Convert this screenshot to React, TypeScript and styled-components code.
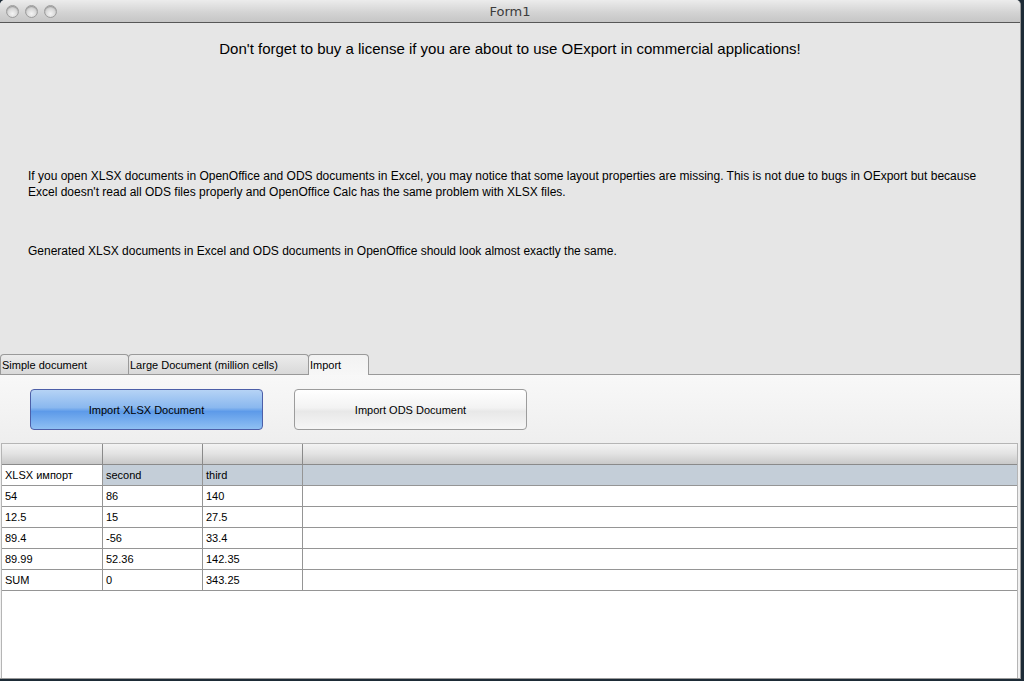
import styled, { createGlobalStyle } from 'styled-components';

const GlobalStyle = createGlobalStyle`
  html, body {
    margin: 0;
    padding: 0;
    background: #1d2b36;
    width: 1024px;
    height: 681px;
    overflow: hidden;
  }
  body {
    font-family: "Liberation Sans", Arial, sans-serif;
    color: #000;
  }
`;

const Window = styled.div`
  width: 1021px;
  height: 679px;
  display: flex;
  flex-direction: column;
  background: #e6e6e6;
  border-radius: 5px 5px 0 0;
  overflow: hidden;
  box-sizing: border-box;
  border-right: 1px solid #9a9a9a;
  border-bottom: 1px solid #9a9a9a;
`;

const TitleBar = styled.div`
  height: 23px;
  flex: none;
  display: flex;
  align-items: center;
  position: relative;
  background: linear-gradient(#ececec, #d2d2d2 60%, #c6c6c6);
  border-bottom: 1px solid #575757;
  box-sizing: border-box;
`;

const Lights = styled.div`
  display: flex;
  gap: 6px;
  padding-left: 6px;
`;

const Light = styled.span`
  width: 13px;
  height: 13px;
  border-radius: 50%;
  box-sizing: border-box;
  border: 1px solid #9c9c9c;
  background: radial-gradient(circle at 50% 70%, #f4f4f4, #d3d3d3 60%, #bdbdbd);
  box-shadow: inset 0 1px 1px rgba(0, 0, 0, 0.25);
`;

const Title = styled.div`
  position: absolute;
  left: 0;
  right: 0;
  text-align: center;
  font-family: "Lucida Grande", "DejaVu Sans", sans-serif;
  font-size: 13px;
  color: #3c3c3c;
`;

const Intro = styled.div`
  height: 330px;
  flex: none;
  padding: 17px 28px 0;
  box-sizing: border-box;
`;

const Heading = styled.div`
  text-align: center;
  font-size: 15px;
  line-height: 18px;
`;

const Para = styled.p<{ $top: number }>`
  margin: ${(p) => p.$top}px 0 0;
  font-size: 12px;
  line-height: 16px;
`;

const TabStrip = styled.div`
  height: 21px;
  flex: none;
  display: flex;
  align-items: flex-end;
`;

const Tab = styled.div<{ $w: number; $active?: boolean }>`
  width: ${(p) => p.$w}px;
  height: ${(p) => (p.$active ? 21 : 20)}px;
  box-sizing: border-box;
  border: 1px solid #9a9a9a;
  border-bottom: none;
  border-radius: 4px 4px 0 0;
  background: ${(p) =>
    p.$active
      ? 'linear-gradient(#f2f2f2, #f7f7f7)'
      : 'linear-gradient(#ececec, #d9d9d9)'};
  font-size: 11px;
  padding: 4px 0 0 1px;
  margin-right: -1px;
  position: relative;
  z-index: ${(p) => (p.$active ? 2 : 1)};
  margin-bottom: ${(p) => (p.$active ? -1 : 0)}px;
`;

const Panel = styled.div`
  flex: 1;
  display: flex;
  flex-direction: column;
  border-top: 1px solid #999;
  background: linear-gradient(#f8f8f8, #eeeeee 70px, #f2f2f2);
  padding: 14px 0 0 1px;
  min-height: 0;
`;

const ButtonRow = styled.div`
  display: flex;
  gap: 31px;
  padding-left: 29px;
  margin-bottom: 13px;
`;

const PushButton = styled.div<{ $primary?: boolean }>`
  width: 233px;
  height: 41px;
  box-sizing: border-box;
  border-radius: 4px;
  display: flex;
  align-items: center;
  justify-content: center;
  font-size: 11px;
  border: 1px solid ${(p) => (p.$primary ? '#4d5fa8' : '#9c9c9c')};
  background: ${(p) =>
    p.$primary
      ? 'linear-gradient(#b6d3f5, #8ab8ef 45%, #5d9ae9 55%, #8fc0f3)'
      : 'linear-gradient(#ffffff, #f3f3f3 45%, #e8e8e8 55%, #f6f6f6)'};
`;

const Grid = styled.div`
  flex: 1;
  margin-right: 2px;
  background: #fff;
  border: 1px solid #b5b5b5;
  border-bottom: none;
  display: flex;
  flex-direction: column;
`;

const Row = styled.div`
  display: grid;
  grid-template-columns: 101px 100px 100px 1fr;
  height: 21px;
  box-sizing: border-box;
  border-bottom: 1px solid #959595;
`;

const HeadRow = styled(Row)`
  height: 21px;
  background: linear-gradient(#f3f3f3, #e2e2e2 50%, #c9c9c9);
  border-bottom: 1px solid #8a8a8a;
`;

const Cell = styled.div<{ $fill?: boolean }>`
  border-right: 1px solid #959595;
  font-size: 11px;
  line-height: 21px;
  padding-left: 3px;
  background: ${(p) => (p.$fill ? '#c4ced8' : 'transparent')};
  white-space: nowrap;
  overflow: hidden;
  &:last-child {
    border-right: none;
  }
`;

const HeadCell = styled(Cell)`
  border-right: 1px solid #8a8a8a;
`;

const rows = [
  ['54', '86', '140'],
  ['12.5', '15', '27.5'],
  ['89.4', '-56', '33.4'],
  ['89.99', '52.36', '142.35'],
  ['SUM', '0', '343.25'],
];

export default function App() {
  return (
    <>
      <GlobalStyle />
      <Window>
        <TitleBar>
          <Lights>
            <Light />
            <Light />
            <Light />
          </Lights>
          <Title>Form1</Title>
        </TitleBar>
        <Intro>
          <Heading>
            Don't forget to buy a license if you are about to use OExport in commercial applications!
          </Heading>
          <Para $top={110}>
            If you open XLSX documents in OpenOffice and ODS documents in Excel, you may notice that some layout
            properties are missing. This is not due to bugs in OExport but because Excel doesn't read all ODS files
            properly and OpenOffice Calc has the same problem with XLSX files.
          </Para>
          <Para $top={43}>
            Generated XLSX documents in Excel and ODS documents in OpenOffice should look almost exactly the same.
          </Para>
        </Intro>
        <TabStrip>
          <Tab $w={129}>Simple document</Tab>
          <Tab $w={181}>Large Document (million cells)</Tab>
          <Tab $w={61} $active>
            Import
          </Tab>
        </TabStrip>
        <Panel>
          <ButtonRow>
            <PushButton $primary>Import XLSX Document</PushButton>
            <PushButton>Import ODS Document</PushButton>
          </ButtonRow>
          <Grid>
            <HeadRow>
              <HeadCell />
              <HeadCell />
              <HeadCell />
              <HeadCell />
            </HeadRow>
            <Row>
              <Cell>XLSX импорт</Cell>
              <Cell $fill>second</Cell>
              <Cell $fill>third</Cell>
              <Cell $fill />
            </Row>
            {rows.map((r, i) => (
              <Row key={i}>
                {r.map((v, j) => (
                  <Cell key={j}>{v}</Cell>
                ))}
                <Cell />
              </Row>
            ))}
          </Grid>
        </Panel>
      </Window>
    </>
  );
}
